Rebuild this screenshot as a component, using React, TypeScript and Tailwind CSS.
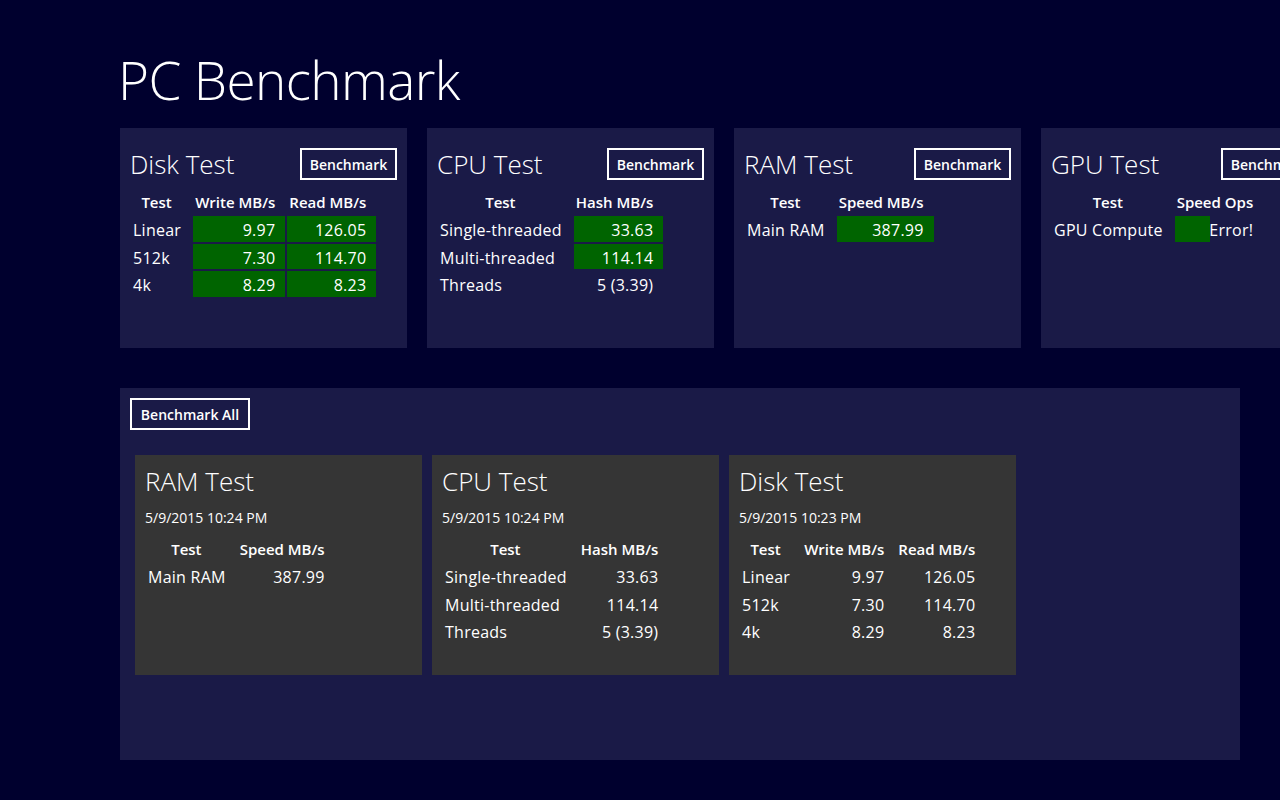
import React from "react";

type Row = { label: string; values: string[]; bar?: boolean[] };

type TestTable = {
  title: string;
  date?: string;
  headers: string[];
  rows: Row[];
};

const topTests: TestTable[] = [
  {
    title: "Disk Test",
    headers: ["Test", "Write MB/s", "Read MB/s"],
    rows: [
      { label: "Linear", values: ["9.97", "126.05"], bar: [true, true] },
      { label: "512k", values: ["7.30", "114.70"], bar: [true, true] },
      { label: "4k", values: ["8.29", "8.23"], bar: [true, true] },
    ],
  },
  {
    title: "CPU Test",
    headers: ["Test", "Hash MB/s"],
    rows: [
      { label: "Single-threaded", values: ["33.63"], bar: [true] },
      { label: "Multi-threaded", values: ["114.14"], bar: [true] },
      { label: "Threads", values: ["5 (3.39)"] },
    ],
  },
  {
    title: "RAM Test",
    headers: ["Test", "Speed MB/s"],
    rows: [{ label: "Main RAM", values: ["387.99"], bar: [true] }],
  },
  {
    title: "GPU Test",
    headers: ["Test", "Speed Ops"],
    rows: [{ label: "GPU Compute", values: ["Error!"] }],
  },
];

const history: TestTable[] = [
  {
    title: "RAM Test",
    date: "5/9/2015 10:24 PM",
    headers: ["Test", "Speed MB/s"],
    rows: [{ label: "Main RAM", values: ["387.99"] }],
  },
  {
    title: "CPU Test",
    date: "5/9/2015 10:24 PM",
    headers: ["Test", "Hash MB/s"],
    rows: [
      { label: "Single-threaded", values: ["33.63"] },
      { label: "Multi-threaded", values: ["114.14"] },
      { label: "Threads", values: ["5 (3.39)"] },
    ],
  },
  {
    title: "Disk Test",
    date: "5/9/2015 10:23 PM",
    headers: ["Test", "Write MB/s", "Read MB/s"],
    rows: [
      { label: "Linear", values: ["9.97", "126.05"] },
      { label: "512k", values: ["7.30", "114.70"] },
      { label: "4k", values: ["8.29", "8.23"] },
    ],
  },
];

// value cells: green bar, a 35px stub for the failed GPU run, or plain
function cellClass(bar: boolean, gpu: boolean) {
  if (bar) return "bg-[#006400] pl-[2px] pr-[10px] text-right whitespace-nowrap";
  if (gpu)
    return "bg-[linear-gradient(to_right,#006400_35px,transparent_35px)] pl-[2px] pr-[10px] text-right whitespace-nowrap";
  return "pl-[2px] pr-[10px] text-right whitespace-nowrap";
}

function Results({ t, gpu = false }: { t: TestTable; gpu?: boolean }) {
  return (
    <table className="border-separate border-spacing-[2px] -ml-[2px] text-[16px] tracking-[0.25px]">
      <thead>
        <tr className="h-[24px]">
          {t.headers.map((h) => (
            <th
              key={h}
              className="pl-[2px] pr-[10px] text-center text-[15px] tracking-normal font-semibold whitespace-nowrap"
            >
              {h}
            </th>
          ))}
        </tr>
      </thead>
      <tbody>
        {t.rows.map((r) => (
          <tr key={r.label} className="h-[25.5px]">
            <td className="pl-[3px] pr-[10px] whitespace-nowrap">
              <span className="relative top-[1.5px]">{r.label}</span>
            </td>
            {r.values.map((v, i) => (
              <td key={i} className={cellClass(!!r.bar?.[i], gpu)}>
                <span className="relative top-[1.5px]">{v}</span>
              </td>
            ))}
          </tr>
        ))}
      </tbody>
    </table>
  );
}

function Button({ label, w }: { label: string; w: string }) {
  return (
    <button
      className={`${w} h-[32px] border-2 border-white text-[14px] font-semibold text-white leading-none`}
    >
      <span className="relative top-[1px]">{label}</span>
    </button>
  );
}

export default function App() {
  return (
    <div className="h-[800px] w-[1280px] overflow-hidden bg-[#00002e] text-white font-['Open_Sans',sans-serif]">
      <h1 className="pl-[118px] pt-[53px] text-[53px] font-light leading-none tracking-[-0.6px]">
        PC Benchmark
      </h1>

      <div className="mt-[22px] flex gap-5 pl-[120px]">
        {topTests.map((t) => (
          <div
            key={t.title}
            className="h-[220px] w-[287px] shrink-0 bg-[#1a1a47] px-[10px] pt-[20px]"
          >
            <div className="flex h-[32px] items-center justify-between">
              <h2 className="text-[26px] font-light leading-none">{t.title}</h2>
              <Button label="Benchmark" w="w-[97px]" />
            </div>
            <div className="mt-[8px]">
              <Results t={t} gpu={t.title === "GPU Test"} />
            </div>
          </div>
        ))}
      </div>

      <div className="ml-[120px] mt-10 h-[372px] w-[1120px] bg-[#1a1a47] p-[10px]">
        <Button label="Benchmark All" w="w-[120px]" />
        <div className="ml-[5px] mt-[25px] flex gap-[10px]">
          {history.map((t) => (
            <div
              key={t.title}
              className="h-[220px] w-[287px] bg-[#353535] px-[10px] pt-[10px]"
            >
              <h2 className="text-[26px] font-light leading-[32px]">{t.title}</h2>
              <div className="mt-[11px] text-[14px] leading-[20px]">{t.date}</div>
              <div className="mt-[7px]">
                <Results t={t} />
              </div>
            </div>
          ))}
        </div>
      </div>
    </div>
  );
}
